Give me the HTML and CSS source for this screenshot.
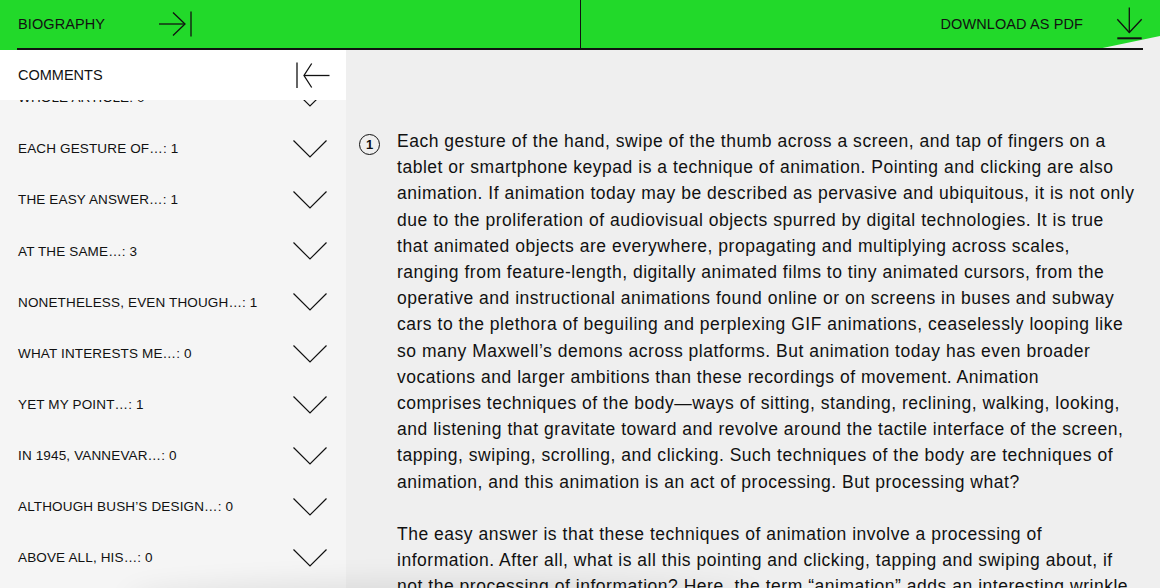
FILE: index.html
```html
<!DOCTYPE html>
<html lang="en">
<head>
<meta charset="utf-8">
<title>Biography</title>
<link rel="stylesheet" href="styles.css">
</head>
<body>
<header class="topbar">
  <div class="topbar-inner">
    <div class="top-left">
      <span class="top-label">BIOGRAPHY</span>
      <svg class="icon-open" width="34" height="26" viewBox="0 0 34 26" fill="none" stroke="#111" stroke-width="1.3">
        <path d="M1 13H27"/>
        <path d="M15 1.5L27 13L15 24.5"/>
        <path d="M33 0.5V25.5"/>
      </svg>
    </div>
    <div class="top-right">
      <span class="top-label">DOWNLOAD AS PDF</span>
      <svg class="icon-download" width="27" height="33" viewBox="0 0 27 33" fill="none" stroke="#111">
        <path d="M13.3 0.5V25.5" stroke-width="1.3"/>
        <path d="M1.3 12.3L13.3 25.5L25.7 12.3" stroke-width="1.3"/>
        <path d="M1.3 31.3H25.7" stroke-width="2"/>
      </svg>
    </div>
  </div>
</header>
<div class="layout">
  <aside class="sidebar">
    <div class="side-head">
      <span class="side-title">COMMENTS</span>
      <svg class="icon-close" width="34" height="27" viewBox="0 0 34 27" fill="none" stroke="#111" stroke-width="1.3">
        <path d="M1 0.5V26"/>
        <path d="M8 13.5H33.5"/>
        <path d="M15.7 1.5L8 13.5L15.7 25.5"/>
      </svg>
    </div>
    <div class="comment-scroll">
      <ul class="comment-list">
        <li class="comment-item"><span>WHOLE ARTICLE: 0</span><svg class="chev" width="34" height="18" viewBox="0 0 34 18" fill="none" stroke="#111" stroke-width="1.2"><path d="M0.5 0.5L17 17L33.5 0.5"/></svg></li>
        <li class="comment-item"><span>EACH GESTURE OF…: 1</span><svg class="chev" width="34" height="18" viewBox="0 0 34 18" fill="none" stroke="#111" stroke-width="1.2"><path d="M0.5 0.5L17 17L33.5 0.5"/></svg></li>
        <li class="comment-item"><span>THE EASY ANSWER…: 1</span><svg class="chev" width="34" height="18" viewBox="0 0 34 18" fill="none" stroke="#111" stroke-width="1.2"><path d="M0.5 0.5L17 17L33.5 0.5"/></svg></li>
        <li class="comment-item"><span>AT THE SAME…: 3</span><svg class="chev" width="34" height="18" viewBox="0 0 34 18" fill="none" stroke="#111" stroke-width="1.2"><path d="M0.5 0.5L17 17L33.5 0.5"/></svg></li>
        <li class="comment-item"><span>NONETHELESS, EVEN THOUGH…: 1</span><svg class="chev" width="34" height="18" viewBox="0 0 34 18" fill="none" stroke="#111" stroke-width="1.2"><path d="M0.5 0.5L17 17L33.5 0.5"/></svg></li>
        <li class="comment-item"><span>WHAT INTERESTS ME…: 0</span><svg class="chev" width="34" height="18" viewBox="0 0 34 18" fill="none" stroke="#111" stroke-width="1.2"><path d="M0.5 0.5L17 17L33.5 0.5"/></svg></li>
        <li class="comment-item"><span>YET MY POINT…: 1</span><svg class="chev" width="34" height="18" viewBox="0 0 34 18" fill="none" stroke="#111" stroke-width="1.2"><path d="M0.5 0.5L17 17L33.5 0.5"/></svg></li>
        <li class="comment-item"><span>IN 1945, VANNEVAR…: 0</span><svg class="chev" width="34" height="18" viewBox="0 0 34 18" fill="none" stroke="#111" stroke-width="1.2"><path d="M0.5 0.5L17 17L33.5 0.5"/></svg></li>
        <li class="comment-item"><span>ALTHOUGH BUSH’S DESIGN…: 0</span><svg class="chev" width="34" height="18" viewBox="0 0 34 18" fill="none" stroke="#111" stroke-width="1.2"><path d="M0.5 0.5L17 17L33.5 0.5"/></svg></li>
        <li class="comment-item"><span>ABOVE ALL, HIS…: 0</span><svg class="chev" width="34" height="18" viewBox="0 0 34 18" fill="none" stroke="#111" stroke-width="1.2"><path d="M0.5 0.5L17 17L33.5 0.5"/></svg></li>
      </ul>
    </div>
  </aside>
  <main class="article">
    <div class="para">
      <span class="num">1</span>
      <p class="text">Each gesture of the hand, swipe of the thumb across a screen, and tap of fingers on a<br>tablet or smartphone keypad is a technique of animation. Pointing and clicking are also<br>animation. If animation today may be described as pervasive and ubiquitous, it is not only<br>due to the proliferation of audiovisual objects spurred by digital technologies. It is true<br>that animated objects are everywhere, propagating and multiplying across scales,<br>ranging from feature-length, digitally animated films to tiny animated cursors, from the<br>operative and instructional animations found online or on screens in buses and subway<br>cars to the plethora of beguiling and perplexing GIF animations, ceaselessly looping like<br>so many Maxwell’s demons across platforms. But animation today has even broader<br>vocations and larger ambitions than these recordings of movement. Animation<br>comprises techniques of the body—ways of sitting, standing, reclining, walking, looking,<br>and listening that gravitate toward and revolve around the tactile interface of the screen,<br>tapping, swiping, scrolling, and clicking. Such techniques of the body are techniques of<br>animation, and this animation is an act of processing. But processing what?</p>
    </div>
    <div class="para">
      <span class="num-empty"></span>
      <p class="text">The easy answer is that these techniques of animation involve a processing of<br>information. After all, what is all this pointing and clicking, tapping and swiping about, if<br>not the processing of information? Here, the term “animation” adds an interesting wrinkle</p>
    </div>
  </main>
</div>
</body>
</html>
```

FILE: styles.css
```css
* {
  box-sizing: border-box;
}

html, body {
  margin: 0;
  padding: 0;
}

body {
  position: relative;
  width: 1160px;
  height: 588px;
  overflow: hidden;
  background: #efefef;
  color: #111;
  font-family: "Liberation Sans", Arial, sans-serif;
}

/* soft shadow cast by an off-screen bar below the viewport */
body::after {
  content: "";
  position: absolute;
  left: 130px;
  bottom: -24px;
  width: 620px;
  height: 24px;
  border-radius: 50%;
  box-shadow: 0 0 28px 6px rgba(0, 0, 0, 0.09);
  pointer-events: none;
}

/* ---------- top bar ---------- */
.topbar {
  position: relative;
  height: 50px;
  padding: 0 17px;
  background: #22d92a;
}

.topbar::after {
  content: "";
  position: absolute;
  right: 0;
  bottom: 0;
  width: 67px;
  height: 14px;
  background: #efefef;
  clip-path: polygon(100% 0, 100% 100%, 0 100%);
}

.topbar-inner {
  position: relative;
  z-index: 1;
  display: flex;
  height: 50px;
  border-bottom: 2px solid #111;
}

.top-left {
  display: flex;
  align-items: center;
  gap: 53px;
  width: 564px;
  padding-left: 1px;
  border-right: 1.5px solid #111;
}

.top-right {
  flex: 1;
  display: flex;
  align-items: center;
  justify-content: flex-end;
  gap: 33px;
}

.top-label {
  font-size: 14.5px;
  line-height: 1;
  letter-spacing: 0.1px;
}

.icon-open {
  display: block;
}

.icon-download {
  display: block;
  margin-top: -2px;
}

/* ---------- layout ---------- */
.layout {
  display: flex;
  height: 538px;
}

.sidebar {
  display: flex;
  flex-direction: column;
  width: 346px;
  flex: none;
  background: #f5f5f5;
}

.side-head {
  display: flex;
  align-items: center;
  justify-content: space-between;
  height: 50px;
  flex: none;
  padding: 0 16px 0 18px;
  background: #fff;
}

.side-title {
  font-size: 14.5px;
  line-height: 1;
}

.icon-close {
  display: block;
}

.comment-scroll {
  flex: 1;
  overflow: hidden;
}

.comment-list {
  margin: -27.7px 0 0;
  padding: 0;
  list-style: none;
}

.comment-item {
  display: flex;
  align-items: center;
  justify-content: space-between;
  height: 51.125px;
  padding: 0 19px 0 18px;
  font-size: 13.5px;
  line-height: 1;
  letter-spacing: 0.15px;
}

.chev {
  display: block;
}

/* ---------- article ---------- */
.article {
  flex: 1;
  padding: 78px 0 0 13px;
  overflow: hidden;
}

.para {
  display: grid;
  grid-template-columns: 38px 1fr;
  margin-bottom: 26.2px;
}

.num {
  display: flex;
  align-items: center;
  justify-content: center;
  width: 21px;
  height: 21px;
  margin-top: 6px;
  border: 1.5px solid #111;
  border-radius: 50%;
  font-size: 13px;
  font-weight: 700;
  line-height: 1;
}

.text {
  margin: 0;
  font-size: 17.5px;
  line-height: 26.2px;
  letter-spacing: 0.52px;
  white-space: nowrap;
}
```
